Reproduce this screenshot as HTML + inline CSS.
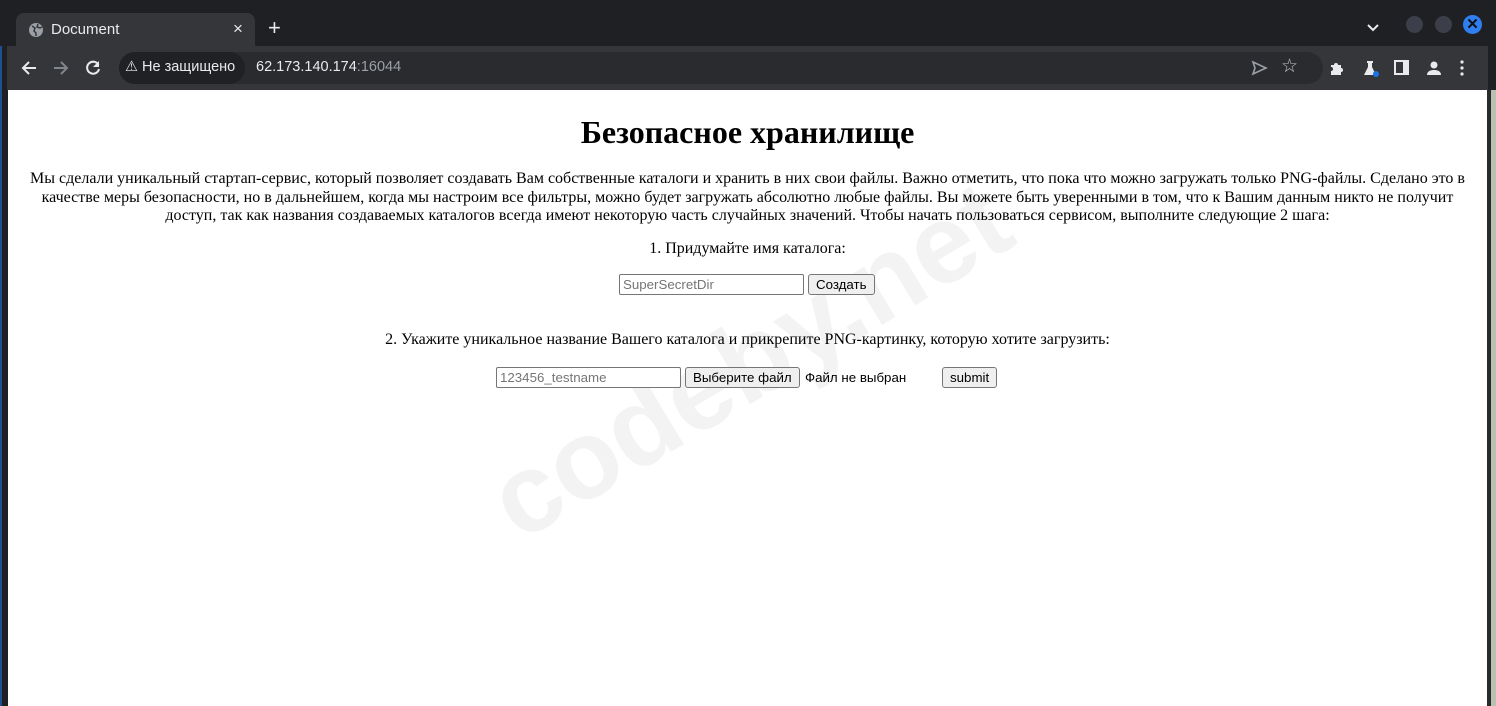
<!DOCTYPE html>
<html><head><meta charset="utf-8"><style>
*{box-sizing:border-box}
body{margin:0;width:1496px;height:706px;background:#1f2023;position:relative;overflow:hidden;font-family:"Liberation Serif",serif}
.tabbar{position:absolute;left:0;top:0;width:1496px;height:46px;background:#1f2023}
.tab{position:absolute;left:16px;top:13px;width:239px;height:34px;background:#35363a;border-radius:8px 8px 0 0;color:#e8eaed;font:15px "Liberation Sans",sans-serif}
.toolbar{position:absolute;left:7px;top:46px;width:1481px;height:44px;background:#35363a}
.omni{position:absolute;left:112px;top:6px;width:1204px;height:32px;background:#2a2b2f;border-radius:16px}
.pill{position:absolute;left:112px;top:6px;width:126px;height:32px;background:#202124;border-radius:16px}
.ui{font-family:"Liberation Sans",sans-serif;color:#e8eaed;position:absolute}
.content{position:absolute;left:8px;top:90px;width:1479px;height:616px;background:#fff;overflow:hidden}
.c{position:absolute;left:0;width:1479px;text-align:center;color:#000;font-size:16px}
input{font:13.3px "Liberation Sans",sans-serif;border:1px solid #767676;border-radius:2px;height:21px;padding:1px 3px;position:absolute}
.btn{position:absolute;font:13.3px "Liberation Sans",sans-serif;background:#efefef;border:1px solid #767676;border-radius:3px;height:21px;padding:0 7px;line-height:19px;color:#000}
.wm{position:absolute;left:742px;top:270px;font:bold 112px/112px "Liberation Sans",sans-serif;color:#f3f3f3;transform:translate(-50%,-50%) rotate(-31deg);white-space:nowrap}
</style></head><body>
<div style="position:absolute;left:0;top:0;width:2px;height:706px;background:#1e4f8f"></div>
<div class="tabbar"></div>
<div class="tab">
 <svg style="position:absolute;left:12px;top:9px" width="16" height="16" viewBox="0 0 16 16"><circle cx="8" cy="8" r="7" fill="#9aa0a6"/><path d="M4 4l3 2-1 3 2 2v3M10 2l-1 3 3 1 2-1" stroke="#35363a" stroke-width="1.5" fill="none"/></svg>
 <span style="position:absolute;left:35px;top:8px">Document</span>
 <span style="position:absolute;left:217px;top:6px;font-size:17px">×</span>
</div>
<div class="ui" style="left:268px;top:17px;font-size:22px;line-height:22px">+</div>
<svg class="ui" style="left:1366px;top:23px" width="14" height="10" viewBox="0 0 14 10"><path d="M2 2l5 5 5-5" stroke="#e8eaed" stroke-width="2" fill="none"/></svg>
<div style="position:absolute;left:1406px;top:16px;width:17px;height:17px;border-radius:50%;background:#3c3f4a"></div>
<div style="position:absolute;left:1435px;top:16px;width:17px;height:17px;border-radius:50%;background:#3c3f4a"></div>
<div style="position:absolute;left:1463px;top:15px;width:19px;height:19px;border-radius:50%;background:#2f7ff0;color:#111;font:bold 15px/19px 'Liberation Sans';text-align:center">✕</div>
<div class="toolbar">
 <svg style="position:absolute;left:13px;top:13px" width="18" height="18" viewBox="0 0 18 18"><path d="M16 9H3M9 3L3 9l6 6" stroke="#e8eaed" stroke-width="2" fill="none"/></svg>
 <svg style="position:absolute;left:45px;top:13px" width="18" height="18" viewBox="0 0 18 18"><path d="M2 9h13M9 3l6 6-6 6" stroke="#80868b" stroke-width="2" fill="none"/></svg>
 <svg style="position:absolute;left:77px;top:13px" width="18" height="18" viewBox="0 0 18 18"><path d="M14.5 6A6 6 0 1 0 15 10" stroke="#e8eaed" stroke-width="2" fill="none"/><path d="M15 2v6h-6z" fill="#e8eaed"/></svg>
 <div class="omni"></div>
 <div class="pill"></div>
 <div class="ui" style="left:118px;top:13px;font-size:14.5px">⚠ Не защищено</div>
 <div class="ui" style="left:249px;top:13px;font-size:14.5px">62.173.140.174<span style="color:#9aa0a6">:16044</span></div>
 <svg style="position:absolute;left:1243px;top:13px" width="18" height="18" viewBox="0 0 18 18"><path d="M3 3l13 6-13 6 2-6z" stroke="#9aa0a6" stroke-width="1.6" fill="none"/></svg>
 <div class="ui" style="left:1274px;top:9px;font-size:19px;color:#c4c7c5">☆</div>
 <svg style="position:absolute;left:1321px;top:13px" width="18" height="18" viewBox="0 0 18 18"><path d="M3 6h3a2 2 0 1 1 4 0h3v3a2 2 0 1 1 0 4v3H3v-4a2 2 0 1 0 0-4z" fill="#e8eaed"/></svg>
 <svg style="position:absolute;left:1354px;top:12px" width="20" height="20" viewBox="0 0 20 20"><path d="M6 3h6v2h-1v4l4 8H3l4-8V5H6z" fill="#e8eaed"/><circle cx="15" cy="16" r="3" fill="#1a73e8"/></svg>
 <div style="position:absolute;left:1387px;top:14px;width:15px;height:15px;border:2px solid #e8eaed;border-right-width:6px"></div>
 <svg style="position:absolute;left:1418px;top:13px" width="18" height="18" viewBox="0 0 18 18"><circle cx="9" cy="6" r="3.5" fill="#e8eaed"/><path d="M2 16c0-4 4-5 7-5s7 1 7 5z" fill="#e8eaed"/></svg>
 <svg style="position:absolute;left:1451px;top:13px" width="8" height="18" viewBox="0 0 8 18"><circle cx="4" cy="3" r="1.6" fill="#e8eaed"/><circle cx="4" cy="9" r="1.6" fill="#e8eaed"/><circle cx="4" cy="15" r="1.6" fill="#e8eaed"/></svg>
</div>
<div style="position:absolute;left:1487px;top:90px;width:9px;height:616px;background:#2a2b2e"></div>
<div style="position:absolute;left:1491px;top:90px;width:5px;height:616px;background:#b9c2b0"></div>
<div class="content">
 <div class="wm">codeby.net</div>
 <div class="c" style="top:22px;font-size:32px;font-weight:bold;line-height:40px">Безопасное хранилище</div>
 <div class="c" style="top:80px;line-height:18.5px;padding:0 8px">Мы сделали уникальный стартап-сервис, который позволяет создавать Вам собственные каталоги и хранить в них свои файлы. Важно отметить, что пока что можно загружать только PNG-файлы. Сделано это в качестве меры безопасности, но в дальнейшем, когда мы настроим все фильтры, можно будет загружать абсолютно любые файлы. Вы можете быть уверенными в том, что к Вашим данным никто не получит доступ, так как названия создаваемых каталогов всегда имеют некоторую часть случайных значений. Чтобы начать пользоваться сервисом, выполните следующие 2 шага:</div>
 <div class="c" style="top:150px;line-height:18px">1. Придумайте имя каталога:</div>
 <input style="left:611px;top:184px;width:185px" placeholder="SuperSecretDir">
 <div class="btn" style="left:800px;top:184px">Создать</div>
 <div class="c" style="top:241px;line-height:18px">2. Укажите уникальное название Вашего каталога и прикрепите PNG-картинку, которую хотите загрузить:</div>
 <input style="left:488px;top:277px;width:185px" placeholder="123456_testname">
 <div class="btn" style="left:677px;top:277px">Выберите файл</div>
 <div style="position:absolute;left:797px;top:280px;font:13.3px 'Liberation Sans',sans-serif">Файл не выбран</div>
 <div class="btn" style="left:934px;top:277px">submit</div>
</div>
</body></html>
